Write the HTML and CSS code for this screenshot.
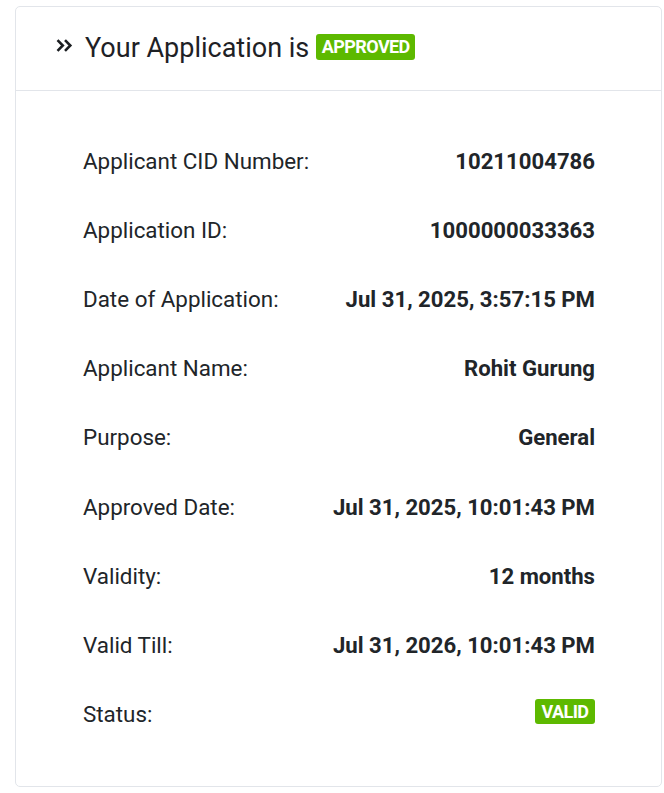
FILE: index.html
```html
<!DOCTYPE html>
<html>
<head>
<meta charset="utf-8">
<link rel="stylesheet" href="styles.css">
</head>
<body>
<div class="card">
  <div class="card-header">
    <svg class="chev" width="17" height="13" viewBox="0 0 17 13"><path d="M1.5 1.2 L6.8 6.5 L1.5 11.8 M9 1.2 L14.3 6.5 L9 11.8" fill="none" stroke="#1b1e21" stroke-width="2.6"/></svg>
    <span class="title">Your Application is</span>
    <span class="badge badge-lg">APPROVED</span>
  </div>
  <div class="card-body">
    <div class="row"><span class="label">Applicant CID Number:</span><span class="value">10211004786</span></div>
    <div class="row"><span class="label">Application ID:</span><span class="value">1000000033363</span></div>
    <div class="row"><span class="label">Date of Application:</span><span class="value">Jul 31, 2025, 3:57:15 PM</span></div>
    <div class="row"><span class="label">Applicant Name:</span><span class="value">Rohit Gurung</span></div>
    <div class="row"><span class="label">Purpose:</span><span class="value">General</span></div>
    <div class="row"><span class="label">Approved Date:</span><span class="value">Jul 31, 2025, 10:01:43 PM</span></div>
    <div class="row"><span class="label">Validity:</span><span class="value">12 months</span></div>
    <div class="row"><span class="label">Valid Till:</span><span class="value">Jul 31, 2026, 10:01:43 PM</span></div>
    <div class="row"><span class="label">Status:</span><span class="badge badge-sm">VALID</span></div>
  </div>
</div>
</body>
</html>
```
FILE: styles.css
```css
* { box-sizing: border-box; }
body {
  margin: 0;
  padding: 6px 2px 0 15px;
  font-family: Roboto, "Liberation Sans", sans-serif;
  color: #212529;
  background: #fff;
}
.card {
  width: 647px;
  border: 1px solid #e2e5ea;
  border-radius: 5px;
  background: #fff;
}
.card-header {
  height: 84px;
  border-bottom: 1px solid #e2e5ea;
  display: flex;
  align-items: center;
  padding-left: 40px;
  padding-bottom: 2px;
}
.chev { margin-right: 12px; margin-top: -5px; }
.title {
  font-size: 27px;
  font-weight: 400;
  color: #1e2125;
  margin-right: 7px;
}
.badge {
  background: #5db900;
  color: #fff;
  font-weight: 700;
  border-radius: 3px;
  display: inline-flex;
  align-items: center;
  justify-content: center;
  letter-spacing: -0.6px;
}
.badge-lg {
  font-size: 18px;
  height: 26px;
  width: 99px;
  margin-top: -2px;
}
.badge-sm {
  font-size: 18px;
  height: 25px;
  width: 60px;
  margin-top: -6px;
}
.card-body {
  padding: 35px 66px 37px 67px;
}
.row {
  height: 69.2px;
  display: flex;
  justify-content: space-between;
  align-items: center;
  font-size: 22.4px;
}
.label { font-weight: 400; color: #212529; }
.value { font-weight: 700; color: #212529; font-size: 22.15px; }
```
